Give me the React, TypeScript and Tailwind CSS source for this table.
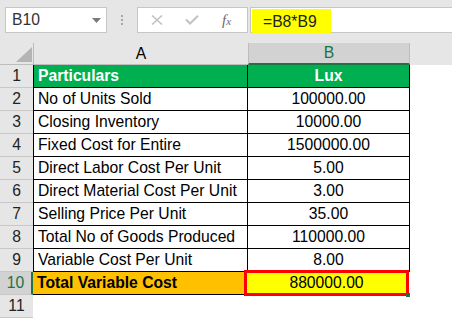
import React from "react";

const rows = [
  { label: "No of Units Sold", value: "100000.00" },
  { label: "Closing Inventory", value: "10000.00" },
  { label: "Fixed Cost for Entire", value: "1500000.00" },
  { label: "Direct Labor Cost Per Unit", value: "5.00" },
  { label: "Direct Material Cost Per Unit", value: "3.00" },
  { label: "Selling Price Per Unit", value: "35.00" },
  { label: "Total No of Goods Produced", value: "110000.00" },
  { label: "Variable Cost Per Unit", value: "8.00" },
];

function RowHead({ n, active }: { n: number; active?: boolean }) {
  return (
    <div
      className={
        "flex w-[33px] shrink-0 items-center justify-center border-b border-[#c8c8c8] " +
        (active
          ? "bg-[#d2d2d2] text-[#217346] border-r-2 border-r-[#217346]"
          : "bg-[#e6e6e6] text-[#222]")
      }
    >
      {n}
    </div>
  );
}

export default function App() {
  return (
    <div
      className="h-[318px] w-[452px] overflow-hidden bg-white text-[15.7px] leading-none text-black"
      style={{ fontFamily: '"Liberation Sans", Arial, sans-serif' }}
    >
      {/* formula bar */}
      <div className="flex h-[43px] items-start gap-0 bg-[#e6e6e6] pl-[5px] pt-[7px]">
        <div className="flex h-[26px] w-[102px] items-center justify-between border border-[#c6c6c6] bg-white pl-[6px] pr-[5px]">
          <span className="text-[#333]">B10</span>
          <svg width="9" height="5" viewBox="0 0 9 5">
            <path d="M0 0 H9 L4.5 5 Z" fill="#7a7a7a" />
          </svg>
        </div>
        <div className="flex h-[26px] w-[30px] flex-col items-center justify-center gap-[2px]">
          <span className="h-[2px] w-[2px] bg-[#a6a6a6]" />
          <span className="h-[2px] w-[2px] bg-[#a6a6a6]" />
          <span className="h-[2px] w-[2px] bg-[#a6a6a6]" />
        </div>
        <div className="flex h-[26px] w-[111px] items-center border border-[#c6c6c6] bg-white">
          <svg width="12" height="10" viewBox="0 0 12 10" className="ml-[13px]">
            <path d="M1 0.5 L11 9.5 M11 0.5 L1 9.5" stroke="#c2c2c2" strokeWidth="1.6" />
          </svg>
          <svg width="14" height="10" viewBox="0 0 14 10" className="ml-[22px]">
            <path d="M1 4.5 L5 8.5 L13 0.8" stroke="#c2c2c2" strokeWidth="2" fill="none" />
          </svg>
          <span
            className="ml-[23px] text-[15px] italic text-[#6a6a6a]"
            style={{ fontFamily: '"Liberation Serif", serif' }}
          >
            f<span className="text-[11px]">x</span>
          </span>
        </div>
        <div className="ml-[2px] flex h-[26px] flex-1 border border-r-0 border-[#c6c6c6] bg-white pl-[1px] pt-[1px]">
          <div className="flex h-[25px] w-[79px] items-center bg-[#ffff00] pl-[11px] text-[#222]">
            =B8*B9
          </div>
        </div>
      </div>

      {/* column headers */}
      <div className="flex h-[22px] bg-[#e6e6e6]">
        <div className="relative w-[33px] shrink-0 border-b border-[#bdbdbd]">
          <svg width="16" height="15" viewBox="0 0 16 15" className="absolute bottom-[2px] right-[1px]">
            <path d="M16 0 V15 H0 Z" fill="#b4b4b4" />
          </svg>
        </div>
        <div className="flex w-[215px] shrink-0 items-center justify-center border-b border-l border-[#bdbdbd]">
          A
        </div>
        <div className="flex w-[162px] shrink-0 items-center justify-center border-b-2 border-l border-r border-l-[#bdbdbd] border-r-[#bdbdbd] border-b-[#217346] bg-[#d2d2d2] text-[#217346]">
          B
        </div>
        <div className="flex-1" />
      </div>

      {/* row 1 */}
      <div className="flex h-[23px]">
        <RowHead n={1} />
        <div className="flex w-[215px] shrink-0 items-center border-b border-l border-r border-black bg-[#00b050] pl-[4px] font-bold text-white">
          Particulars
        </div>
        <div className="flex w-[162px] shrink-0 items-center justify-center border-b border-r border-black bg-[#00b050] font-bold text-white">
          Lux
        </div>
      </div>

      {rows.map((r, i) => (
        <div key={r.label} className="flex h-[23px]">
          <RowHead n={i + 2} />
          <div className="flex w-[215px] shrink-0 items-center border-b border-l border-r border-black pl-[4px]">
            {r.label}
          </div>
          <div className="flex w-[162px] shrink-0 items-center justify-center border-b border-r border-black">
            {r.value}
          </div>
        </div>
      ))}

      {/* row 10 */}
      <div className="flex h-[23px]">
        <RowHead n={10} active />
        <div className="flex w-[213px] shrink-0 items-center border-b border-r border-black bg-[#ffc000] pl-[4px] font-bold">
          Total Variable Cost
        </div>
        <div className="relative flex w-[162px] shrink-0 items-center justify-center border-b border-r border-black bg-[#ffff00]">
          880000.00
          <div className="absolute -left-[2px] -right-[2px] -top-[2px] -bottom-[2px] border-[3px] border-[#ff0000]" />
          <div className="absolute -bottom-[3px] -right-[3px] h-[4px] w-[4px] bg-[#217346]" />
        </div>
      </div>

      {/* row 11 */}
      <div className="flex h-[23px]">
        <RowHead n={11} />
      </div>
    </div>
  );
}
